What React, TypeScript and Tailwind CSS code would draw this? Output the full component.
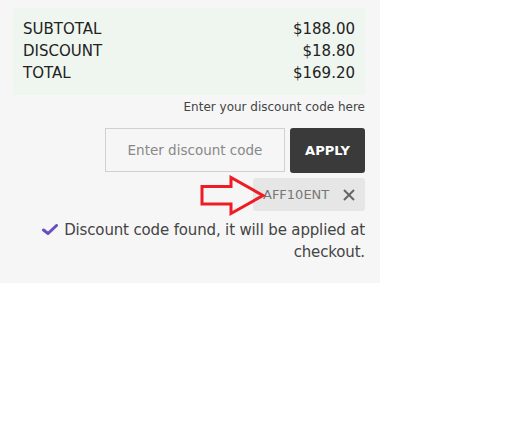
import React from "react";

export default function App() {
  const font = { fontFamily: '"DejaVu Sans", "Liberation Sans", sans-serif' };
  return (
    <div className="w-[520px] h-[436px] bg-white" style={font}>
      <div className="w-[380px] h-[283px] bg-[#f6f6f6] pl-[13px] pr-[15px] pt-[8px]">
        <div className="bg-[#eff5ef] pl-[10px] pr-[10px] pt-[10px] pb-[11px] text-[15px] leading-[22px] text-[#222]">
          <div className="flex justify-between"><span>SUBTOTAL</span><span>$188.00</span></div>
          <div className="flex justify-between"><span>DISCOUNT</span><span>$18.80</span></div>
          <div className="flex justify-between"><span>TOTAL</span><span>$169.20</span></div>
        </div>
        <div className="text-right text-[12px] leading-[16px] text-[#444] mt-[4px]">
          Enter your discount code here
        </div>
        <div className="flex justify-end mt-[13px] h-[44px]">
          <div className="w-[180px] h-[44px] border border-[#d0d0d0] flex items-center justify-center text-[13.5px] text-[#888]">
            Enter discount code
          </div>
          <div className="ml-[5px] w-[75px] h-[45px] bg-[#3a3a3a] rounded-[3px] flex items-center justify-center text-white font-bold text-[13px]">
            APPLY
          </div>
        </div>
        <div className="relative flex justify-end mt-[6px]">
          <div className="w-[112px] h-[33px] bg-[#e6e6e6] rounded-[3px] flex items-center pl-[10px] pr-[9px] text-[13px] text-[#777]">
            <span className="flex-1">AFF10ENT</span>
            <svg width="14" height="14" viewBox="0 0 14 14" className="ml-[6px]">
              <path d="M2 2 L12 12 M12 2 L2 12" stroke="#666" strokeWidth="2" fill="none" />
            </svg>
          </div>
          <svg className="absolute left-[186px] top-[-3px]" width="70" height="42" viewBox="0 0 70 42">
            <polygon
              points="3,11.5 32,11.5 32,2.5 64,20.5 32,38.5 32,29 3,29"
              fill="none"
              stroke="#ee1c24"
              strokeWidth="3"
              strokeLinejoin="miter"
            />
          </svg>
        </div>
        <div className="flex justify-end mt-[8px] text-[15px] leading-[22px] text-[#444] tracking-[-0.15px]">
          <div className="text-right w-[340px]">
            <svg width="16" height="11" viewBox="0 0 16 11" className="inline-block mr-[6px] align-baseline">
              <path d="M1.5 6 L6 9.5 L14.5 1.5" stroke="#6a4fc0" strokeWidth="3" fill="none" strokeLinecap="round" />
            </svg>
            Discount code found, it will be applied at checkout.
          </div>
        </div>
      </div>
    </div>
  );
}
